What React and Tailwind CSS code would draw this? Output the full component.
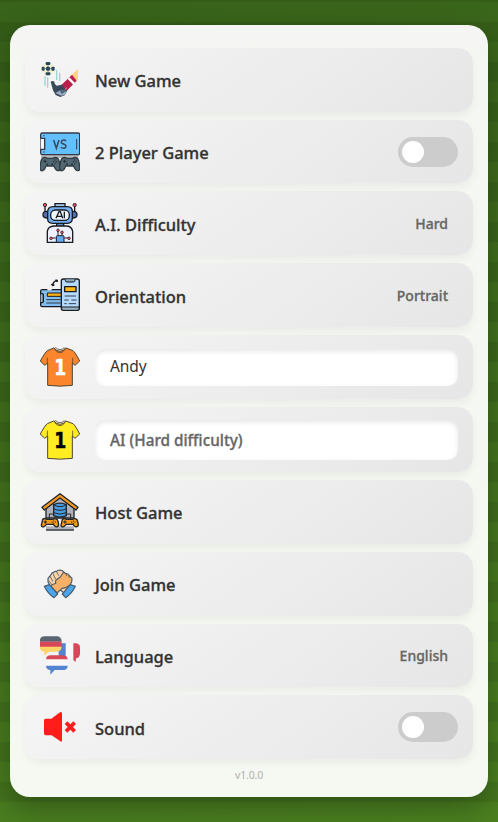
const Svg = ({ box, children }) => (
  <svg viewBox={box} className="block h-10 w-10 shrink-0" aria-hidden="true">{children}</svg>
);

const KickIcon = () => (
  <Svg box="30 30 120 120">
    <circle cx="54" cy="56" r="19" fill="#f3efd2" />
    <g fill="#24475a">
      <rect x="47" y="36" width="14" height="9" rx="3" />
      <rect x="47" y="67" width="14" height="9" rx="3" />
      <rect x="35" y="50" width="9" height="12" rx="3" />
      <rect x="64" y="50" width="10" height="12" rx="3" />
      <circle cx="54" cy="56" r="6.5" />
    </g>
    <path d="M44 56H64M54 45V67" stroke="#24475a" strokeWidth="1.5" />
    <path d="M45 78v30M53 82v31M80 60v30M89 68v25" stroke="#9ad6d2" strokeWidth="4" fill="none" />
    <path d="M125 74L144 57V89L138 93Z" fill="#ffd67c" />
    <path d="M94 105L126 74L140 92L112 121L96 120Z" fill="#b91f4a" />
    <path d="M113 87L118 82L135 99L130 104Z" fill="#fff" />
    <path d="M62 95C68 91 75 94 74 101L80 107L95 104L112 122L104 136L91 141L77 135L69 121Z" fill="#39495b" />
    <path d="M76 129L92 121L110 123L105 134L94 137Z" fill="#9baec4" />
    <path d="M89 121L95 132L109 123Z" fill="#4d6074" />
    <path d="M104 119L111 113" stroke="#ed8ba0" strokeWidth="3" />
  </Svg>
);

const Pad = ({ x }) => (
  <g transform={`translate(${x} 0)`}>
    <path d="M38 107Q46 103 51 108H69Q76 103 83 108Q88 113 90 133Q92 146 84 145Q77 145 72 131H48Q42 147 34 145Q29 144 31 128Q33 112 38 107Z" fill="#526974" stroke="#303c43" strokeWidth="4" />
    <path d="M45 112v10M40 117h10" stroke="#263137" strokeWidth="3" />
    <circle cx="75" cy="113" r="2" fill="#202b31" /><circle cx="79" cy="118" r="2" fill="#202b31" />
    <circle cx="71" cy="118" r="2" fill="#202b31" /><circle cx="75" cy="123" r="2" fill="#202b31" />
    <circle cx="52" cy="126" r="3" fill="#25333a" /><circle cx="67" cy="126" r="3" fill="#25333a" />
  </g>
);

const VersusIcon = () => (
  <Svg box="30 29 120 120">
    <rect x="33" y="98" width="112" height="9" fill="#b9b9bf" />
    <rect x="32" y="32" width="117" height="65" rx="5" fill="#64bffd" stroke="#353b46" strokeWidth="4" />
    <path d="M32 48H44V81H32" fill="#f4f7fa" stroke="#353b46" strokeWidth="4" />
    <path d="M140 50v31" stroke="#353b46" strokeWidth="3" />
    <circle cx="42" cy="40" r="2" fill="#303846" /><circle cx="42" cy="89" r="2" fill="#303846" />
    <path d="M71 53L79 78L87 53M108 56Q105 52 100 53Q94 54 94 59Q94 64 101 65Q108 67 108 72Q107 78 101 78Q95 78 93 74" fill="none" stroke="#34495b" strokeWidth="4.5" />
    <Pad x="0" /><Pad x="59" />
  </Svg>
);

const RobotIcon = () => (
  <Svg box="30 27 120 120">
    <g stroke="#191b22" strokeWidth="4">
      <path d="M45 37V54M134 37V54" fill="none" />
      <circle cx="45" cy="33" r="5" fill="#f34b5d" strokeWidth="2.5" /><circle cx="134" cy="33" r="5" fill="#f34b5d" strokeWidth="2.5" />
      <path d="M52 52Q39 51 39 62Q39 72 52 72M127 52Q141 51 141 62Q141 72 127 72" fill="#5270b7" />
      <path d="M75 38V29H105V38" fill="#abcaf0" />
      <path d="M80 87H101V98H80Z" fill="#608bc9" />
      <path d="M69 38H112Q128 38 127 54V73Q127 88 112 88H68Q52 88 53 73V54Q53 38 69 38Z" fill="#73aff2" />
      <rect x="62" y="48" width="56" height="31" rx="14" fill="#edf5ff" />
      <path d="M52 145V112Q54 97 72 96H108Q125 96 128 112V145Z" fill="#eef0ff" />
      <path d="M79 145V128Q79 125 82 125H99Q102 125 102 128V145Z" fill="#65a7ef" strokeWidth="3" />
      <path d="M84 109V124M96 115V124M62 132H77M103 132H117" fill="none" strokeWidth="3" />
      <circle cx="84" cy="109" r="4" fill="#ec5968" strokeWidth="2" /><circle cx="96" cy="115" r="4" fill="#ec5968" strokeWidth="2" />
      <circle cx="63" cy="133" r="4" fill="#ec5968" strokeWidth="2" /><circle cx="117" cy="133" r="4" fill="#ec5968" strokeWidth="2" />
      <path d="M78 73L87 53H91L98 73M82 67H95M103 53V73" fill="none" />
    </g>
  </Svg>
);

const OrientationIcon = () => (
  <Svg box="30 27 120 120">
    <g stroke="#171b20" strokeWidth="4" strokeLinejoin="round">
      <rect x="32" y="71" width="79" height="51" rx="5" fill="#82bdf2" />
      <path d="M32 83H36Q40 83 40 87V106Q40 110 36 110H32" fill="#9bb8c9" />
      <path d="M52 81H95V91H52Z" fill="#ffb619" strokeWidth="3" />
      <path d="M49 101H91M49 111H91" strokeWidth="2.5" />
      <rect x="94" y="39" width="54" height="94" rx="6" fill="#b4dbff" />
      <path d="M106 40V43Q106 48 111 48H130Q135 48 135 43V40" fill="#8faabd" strokeWidth="3" />
      <path d="M95 123H147V128Q147 133 141 133H100Q95 133 95 127Z" fill="#9bb5c5" strokeWidth="3" />
      <rect x="104" y="62" width="34" height="15" fill="#ffb619" />
      <path d="M104 90H138M103 102H116M124 102H140M103 113H110M116 113H138" strokeWidth="2.5" />
      <path d="M68 58Q69 47 80 44" fill="none" />
      <path d="M76 42H82V48ZM64 55L68 60L73 57Z" fill="#171b20" strokeWidth="3" />
    </g>
    <path d="M52 71h13" stroke="#eef0f1" strokeWidth="4" />
  </Svg>
);

const ShirtIcon = ({ color, ink }) => (
  <Svg box="30 27 120 120">
    <path d="M71 30Q90 50 108 30L129 38Q135 42 149 69L135 82L127 75V142Q91 147 53 142V75L44 82L31 69Q45 43 52 38Z" fill={color} stroke="#50432f" strokeWidth="3" strokeLinejoin="round" />
    <path d="M73 29Q76 43 90 44Q103 43 106 29M76 28Q82 35 90 35Q98 35 103 28M52 59V76M128 59V76" fill="none" stroke="#594b31" strokeWidth="2.5" />
    <text x="91" y="110" textAnchor="middle" fill={ink} stroke={ink} strokeWidth="1.5" fontSize="62" fontWeight="700" fontFamily="DejaVu Sans, sans-serif" textLength="36" lengthAdjust="spacingAndGlyphs">1</text>
  </Svg>
);

const OrangePad = ({ x }) => (
  <g transform={`translate(${x} 0)`}>
    <path d="M38 112Q45 107 50 112H68Q76 107 82 113Q85 118 86 130Q84 136 77 134L69 127H50L42 134Q35 136 34 130Z" fill="#f79a1e" stroke="#22262a" strokeWidth="4" />
    <path d="M46 115v10M41 120h10" stroke="#242424" strokeWidth="3" />
    <circle cx="71" cy="117" r="1.7" /><circle cx="71" cy="124" r="1.7" /><circle cx="66" cy="120" r="1.7" /><circle cx="76" cy="120" r="1.7" />
  </g>
);

const HostIcon = () => (
  <Svg box="30 30 120 120">
    <path d="M48 75L90 42L132 75V108H48Z" fill="#b0b1bb" stroke="#22262a" strokeWidth="4" />
    <path d="M36 76L90 35L144 76L138 84L90 48L43 84Z" fill="#f79a1e" stroke="#22262a" strokeWidth="4" strokeLinejoin="round" />
    <path d="M58 110V96H73M122 110V96H107" fill="none" stroke="#22262a" strokeWidth="3" />
    <path d="M71 68Q90 59 109 68V101Q90 110 71 101Z" fill="#479ce2" stroke="#22262a" strokeWidth="4" />
    <path d="M72 69Q90 79 108 69M71 80Q90 90 109 80M71 92Q90 101 109 92" fill="none" stroke="#22262a" strokeWidth="3" />
    <path d="M48 133H132V143H48Z" fill="#b0b1bb" />
    <OrangePad x="0" /><OrangePad x="59" />
    <path d="M48 144H132" stroke="#22262a" strokeWidth="4" />
  </Svg>
);

const HandsIcon = () => (
  <Svg box="30 30 120 120">
    <g stroke="#4a5c6a" strokeWidth="3.5" strokeLinejoin="round" strokeLinecap="round">
      <path d="M60 95L54 84V73L60 66L66 57L74 53L81 51L88 48L97 50L110 64L110 96L121 96L110 116L100 115L82 102Z" fill="#f9d3aa" />
      <path d="M61 68L68 82M68 57L76 74M79 52L86 64M56 80L65 91" fill="none" strokeWidth="2.5" />
      <path d="M60 95L77 88L77 79L91 69L101 54L106 58L114 60L119 66L126 73L125 84L119 94L107 101L96 103L81 117Z" fill="#f7b067" />
      <path d="M107 59L110 65M116 65L118 70" fill="none" strokeWidth="2.5" />
      <path d="M43 97L58 92L83 120L72 131Q53 119 43 97Z" fill="#49a5ee" />
      <path d="M136 97L121 92L97 120L107 131Q126 119 136 97Z" fill="#49a5ee" />
    </g>
  </Svg>
);

const LanguageIcon = () => (
  <Svg box="30 29 120 120">
    <path d="M86 61Q86 51 97 51H108V96H97Q86 95 86 85Z" fill="#5484cf" />
    <path d="M107 51H130V96H107Z" fill="#f7f7f8" />
    <path d="M130 51H138Q150 52 150 64V82Q149 94 138 96L137 107L130 101Z" fill="#d84858" />
    <path d="M48 100V99Q49 87 62 87H101Q112 88 113 100Z" fill="#d84858" />
    <path d="M48 99H113V119H48Z" fill="#f7f7f8" />
    <path d="M48 118H113Q112 131 101 131H74L61 145V131Q48 130 48 118Z" fill="#5484cf" />
    <path d="M29 46Q30 30 43 30H82Q95 32 95 46Z" fill="#596570" />
    <path d="M29 46H95V62H29Z" fill="#d84858" />
    <path d="M29 61H95Q94 74 81 76H56L43 88V76Q30 75 29 61Z" fill="#ffd467" />
  </Svg>
);

const MutedIcon = () => (
  <Svg box="30 243 120 120">
    <path d="M46 278H64L90 259Q96 256 96 263V342Q96 350 90 345L65 328H46Q42 327 42 322V285Q42 278 46 278Z" fill="#ff1c1c" />
    <path d="M108 290L134 316M134 290L108 316" stroke="#ff1c1c" strokeWidth="11" />
  </Svg>
);

const Toggle = () => (
  <button type="button" role="switch" aria-checked="false" aria-label="Toggle" className="flex h-[30px] w-[60px] shrink-0 items-center rounded-full bg-[#ccc] pl-1">
    <span className="h-[22px] w-[22px] rounded-full bg-white" />
  </button>
);

const Row = ({ height = 'h-16', icon, label, labelPad = 'pt-[2px]', children }) => (
  <div className={`flex ${height} shrink-0 items-center rounded-[15px] bg-[linear-gradient(145deg,#f5f5f5,#e6e6e6)] px-[15px] shadow-[0_4px_8px_rgba(0,0,0,0.05)]`}>
    {icon}
    {label && <span className={`ml-[15px] flex-1 text-[16.5px] leading-6 font-medium text-[#333] [-webkit-text-stroke:0.3px_#333] ${labelPad}`}>{label}</span>}
    {children}
  </div>
);

const Value = ({ className = '', children }) => (
  <span className={`mr-[10px] text-[14px] leading-5 font-medium text-[#666] [-webkit-text-stroke:0.3px_#666] ${className}`}>{children}</span>
);

const fieldClass = 'ml-[15px] min-w-0 flex-1 rounded-[10px] bg-white px-[15px] outline-none shadow-[inset_0_2px_5px_rgba(0,0,0,0.1)]';

export default function App() {
  return (
    <main className="h-[822px] w-[498px] overflow-hidden bg-[repeating-linear-gradient(0deg,transparent_0px,transparent_20px,rgba(0,0,0,0.08)_20px,rgba(0,0,0,0.08)_40px),linear-gradient(170deg,#38631a,#4b8020)] px-[10px] pt-[25px] font-['Noto_Sans','Open_Sans',sans-serif]">
      <section className="flex h-[772px] flex-col gap-2 rounded-[20px] bg-[linear-gradient(#f5f5f3,#f5f8f2_7%,#f6f8f2)] px-[15px] pt-[23px] shadow-[0_10px_30px_rgba(0,0,0,0.3)]">
        <Row icon={<KickIcon />} label="New Game" />
        <Row height="h-[63px]" icon={<VersusIcon />} label="2 Player Game"><Toggle /></Row>
        <Row icon={<RobotIcon />} label="A.I. Difficulty" labelPad="pt-1"><Value className="pt-[2px]">Hard</Value></Row>
        <Row icon={<OrientationIcon />} label="Orientation" labelPad="pt-1"><Value className="pt-[2px]">Portrait</Value></Row>
        <Row icon={<ShirtIcon color="#fb852c" ink="#fff" />}>
          <input aria-label="Player 1" defaultValue="Andy" className={`${fieldClass} h-[37px] pb-[2px] text-[15.5px] tracking-[-0.1px] text-[#333]`} />
        </Row>
        <Row height="h-[65px]" icon={<ShirtIcon color="#ffed22" ink="#000" />}>
          <div className={`${fieldClass} flex h-10 items-center pt-px text-[15.3px] font-medium text-[#666] [-webkit-text-stroke:0.3px_#666]`}>AI (Hard difficulty)</div>
        </Row>
        <Row icon={<HostIcon />} label="Host Game" />
        <Row icon={<HandsIcon />} label="Join Game" />
        <Row height="h-[63px]" icon={<LanguageIcon />} label="Language"><Value>English</Value></Row>
        <Row icon={<MutedIcon />} label="Sound" labelPad="pt-1"><Toggle /></Row>
        <p className="text-center text-[10.5px] leading-4 tracking-[-0.15px] text-[#b0b0b0]">v1.0.0</p>
      </section>
    </main>
  );
}
